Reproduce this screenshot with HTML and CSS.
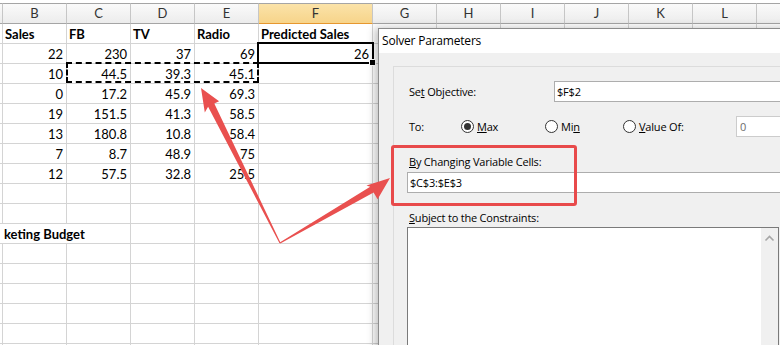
FILE: index.html
```html
<!DOCTYPE html>
<html>
<head lang="en">
    <meta charset="UTF-8">
    <title>Solver Parameters</title>
<link rel="stylesheet" href="styles.css">
</head>
<body>
  <div id="screen">
    <div id="sheet">
      <table class="grid">
        <tr>
          <th class="w-a"></th><th class="w-n">B</th><th class="w-n">C</th><th class="w-n">D</th><th class="w-n">E</th><th class="w-f active">F</th><th class="w-n">G</th><th class="w-n">H</th><th class="w-n">I</th><th class="w-n">J</th><th class="w-n">K</th><th class="w-n">L</th><th class="w-m"></th>
        </tr>
        <tr class="title-row">
          <td></td><td>Sales</td><td>FB</td><td>TV</td><td>Radio</td><td>Predicted Sales</td><td></td><td></td><td></td><td></td><td></td><td></td><td></td>
        </tr>
        <tr>
          <td></td><td class="num">22</td><td class="num">230</td><td class="num">37</td><td class="num">69</td><td class="num">26</td><td></td><td></td><td></td><td></td><td></td><td></td><td></td>
        </tr>
        <tr>
          <td></td><td class="num">10</td><td class="num">44.5</td><td class="num">39.3</td><td class="num">45.1</td><td></td><td></td><td></td><td></td><td></td><td></td><td></td><td></td>
        </tr>
        <tr>
          <td></td><td class="num">0</td><td class="num">17.2</td><td class="num">45.9</td><td class="num">69.3</td><td></td><td></td><td></td><td></td><td></td><td></td><td></td><td></td>
        </tr>
        <tr>
          <td></td><td class="num">19</td><td class="num">151.5</td><td class="num">41.3</td><td class="num">58.5</td><td></td><td></td><td></td><td></td><td></td><td></td><td></td><td></td>
        </tr>
        <tr>
          <td></td><td class="num">13</td><td class="num">180.8</td><td class="num">10.8</td><td class="num">58.4</td><td></td><td></td><td></td><td></td><td></td><td></td><td></td><td></td>
        </tr>
        <tr>
          <td></td><td class="num">7</td><td class="num">8.7</td><td class="num">48.9</td><td class="num">75</td><td></td><td></td><td></td><td></td><td></td><td></td><td></td><td></td>
        </tr>
        <tr>
          <td></td><td class="num">12</td><td class="num">57.5</td><td class="num">32.8</td><td class="num">25.5</td><td></td><td></td><td></td><td></td><td></td><td></td><td></td><td></td>
        </tr>
        <tr><td></td><td></td><td></td><td></td><td></td><td></td><td></td><td></td><td></td><td></td><td></td><td></td><td></td></tr>
        <tr><td></td><td></td><td></td><td></td><td></td><td></td><td></td><td></td><td></td><td></td><td></td><td></td><td></td></tr>
        <tr class="title-row">
          <td class="spill"></td><td class="spill">keting Budget</td><td></td><td></td><td></td><td></td><td></td><td></td><td></td><td></td><td></td><td></td><td></td>
        </tr>
        <tr><td></td><td></td><td></td><td></td><td></td><td></td><td></td><td></td><td></td><td></td><td></td><td></td><td></td></tr>
        <tr><td></td><td></td><td></td><td></td><td></td><td></td><td></td><td></td><td></td><td></td><td></td><td></td><td></td></tr>
        <tr><td></td><td></td><td></td><td></td><td></td><td></td><td></td><td></td><td></td><td></td><td></td><td></td><td></td></tr>
        <tr><td></td><td></td><td></td><td></td><td></td><td></td><td></td><td></td><td></td><td></td><td></td><td></td><td></td></tr>
        <tr><td></td><td></td><td></td><td></td><td></td><td></td><td></td><td></td><td></td><td></td><td></td><td></td><td></td></tr>
        <tr><td></td><td></td><td></td><td></td><td></td><td></td><td></td><td></td><td></td><td></td><td></td><td></td><td></td></tr>
      </table>
      <div class="marquee"></div>
      <div class="selected"><span class="fill-handle"></span></div>
    </div>

    <div id="dialog">
      <div class="dlg-title">Solver Parameters</div>
      <div class="dlg-body">
        <div class="frame">
          <div class="field-row">
            <span class="label-objective">Se<u>t</u> Objective:</span>
            <span class="textbox">$F$2</span>
          </div>
          <div class="field-row to-row">
            <span class="label-to">To:</span>
            <span class="option opt-max"><span class="radio on"></span><u>M</u>ax</span>
            <span class="option opt-min"><span class="radio"></span>Mi<u>n</u></span>
            <span class="option opt-value"><span class="radio"></span><u>V</u>alue Of:</span>
            <span class="textbox disabled">0</span>
          </div>
          <div class="block-label"><u>B</u>y Changing Variable Cells:</div>
          <div class="textbox wide">$C$3:$E$3</div>
          <div class="block-label"><u>S</u>ubject to the Constraints:</div>
          <div class="listbox">
            <div class="scroll">
              <svg width="17" height="17" viewBox="0 0 17 17"><path d="M4.5 10.5 L8.5 6.5 L12.5 10.5" fill="none" stroke="#a6a6a6" stroke-width="1.6"/></svg>
            </div>
          </div>
        </div>
      </div>
    </div>

    <div class="highlight"></div>

    <svg class="arrows" width="780" height="345" viewBox="0 0 780 345">
      <polygon points="280.5,242.8 214.3,103.6 219.1,101.2 201,88 204.8,112.5 208.1,106.7 279.5,243.2" fill="#e9504f"/>
      <polygon points="280.3,243.5 373.6,192.5 377.6,199.2 390,178 366.5,185.5 370.2,186.8 279.7,242.5" fill="#e9504f"/>
    </svg>
  </div>
</body>
</html>
```

FILE: styles.css
```css
body, html {
    border: 0;
    padding: 0;
    margin: 0;
    overflow: hidden;
    background-color: white;
}

#screen {
    position: relative;
    width: 780px;
    height: 345px;
    overflow: hidden;
}

#sheet {
    position: relative;
    padding-top: 3px;
}

.grid {
    border-collapse: separate;
    border-spacing: 0;
    table-layout: fixed;
    width: 857px;
    font-family: Lato, "Liberation Sans", sans-serif;
    font-size: 13px;
    color: black;
}

.grid th, .grid td {
    box-sizing: border-box;
    padding: 0 3px;
    border-right: 1px solid #d4d4d4;
    border-bottom: 1px solid #d4d4d4;
    white-space: nowrap;
    overflow: visible;
}

.grid th:first-child, .grid td:first-child {
    padding: 0;
}

.grid th {
    height: 21px;
    font-weight: normal;
    color: #333;
    text-align: center;
    border-top: 1px solid #a5a5a5;
    border-right-color: #c6c6c6;
    border-bottom-color: #a5a5a5;
    background: linear-gradient(#fafafa, #ececec);
    line-height: 19px;
}

.grid th.active {
    background: linear-gradient(#fbe3a9, #f7d48a);
    border-bottom: 1px solid #e6972f;
}

.w-a { width: 3px; }
.w-n { width: 64px; }
.w-f { width: 114px; }
.w-m { width: 100px; }

.grid td {
    height: 20px;
    line-height: 18px;
    padding-top: 1px;
}

.grid td.num {
    text-align: right;
}

.title-row td {
    font-weight: bold;
    padding-left: 2px;
}

.grid td.spill {
    border-right-style: hidden;
    padding-left: 1px;
}

/* copy marquee and active cell over the grid */
.marquee {
    position: absolute;
    left: 66px;
    top: 62px;
    width: 193px;
    height: 21px;
    box-sizing: border-box;
    border: 2px dashed black;
}

.selected {
    position: absolute;
    left: 257px;
    top: 42px;
    width: 117px;
    height: 22px;
    box-sizing: border-box;
    border: 2px solid black;
}

.fill-handle {
    position: absolute;
    right: -4px;
    bottom: -4px;
    width: 5px;
    height: 5px;
    background-color: black;
    border: 1px solid white;
}

#dialog {
    position: absolute;
    left: 378px;
    top: 28px;
    width: 440px;
    height: 360px;
    border: 1px solid #8c8c8c;
    background-color: #f0f0f0;
    box-shadow: -3px 0 8px rgba(0, 0, 0, 0.25);
    font-family: "Open Sans", "DejaVu Sans", sans-serif;
    font-size: 11px;
    letter-spacing: -0.2px;
    color: black;
}

.dlg-title {
    height: 24px;
    line-height: 24px;
    padding-left: 3px;
    background-color: white;
    font-size: 12px;
}

.dlg-body {
    padding: 13px 0 0 14px;
}

.frame {
    height: 300px;
    border: 1px solid #dcdcdc;
    border-right: 0;
    padding: 14px 0 0 15px;
}

.field-row {
    display: flex;
    align-items: center;
    height: 21px;
}

.to-row {
    margin-top: 14px;
}

.label-objective {
    width: 145px;
}

.label-to {
    width: 52px;
}

.option {
    display: flex;
    align-items: center;
}

.opt-max { width: 84px; }
.opt-min { width: 78px; }
.opt-value { width: 113px; }

.radio {
    box-sizing: border-box;
    width: 13px;
    height: 13px;
    margin-right: 3px;
    border: 1px solid #333;
    border-radius: 50%;
    background-color: white;
    display: flex;
    align-items: center;
    justify-content: center;
}

.radio.on::after {
    content: "";
    width: 7px;
    height: 7px;
    border-radius: 50%;
    background-color: #333;
}

.textbox {
    flex: 1;
    box-sizing: border-box;
    height: 21px;
    line-height: 19px;
    padding-left: 2px;
    border: 1px solid #adadad;
    background-color: white;
}

.textbox.disabled {
    color: #6d6d6d;
    border-color: #cccccc;
    padding-left: 3px;
}

.block-label {
    margin-top: 17px;
    height: 16px;
    line-height: 16px;
}

.textbox.wide {
    margin-top: 2px;
    margin-left: -2px;
}

.listbox {
    box-sizing: border-box;
    margin-top: 1px;
    margin-left: -2px;
    width: 372px;
    height: 200px;
    border: 1px solid #7a7a7a;
    background-color: white;
    display: flex;
    justify-content: flex-end;
}

.scroll {
    width: 17px;
    background-color: #f0f0f0;
}

.scroll svg {
    display: block;
    margin-top: 2px;
}

/* annotation overlays */
.highlight {
    position: absolute;
    left: 391px;
    top: 145px;
    width: 186px;
    height: 61px;
    box-sizing: border-box;
    border: 3px solid #e84a4b;
    border-radius: 3px;
}

.arrows {
    position: absolute;
    left: 0;
    top: 0;
}
```
